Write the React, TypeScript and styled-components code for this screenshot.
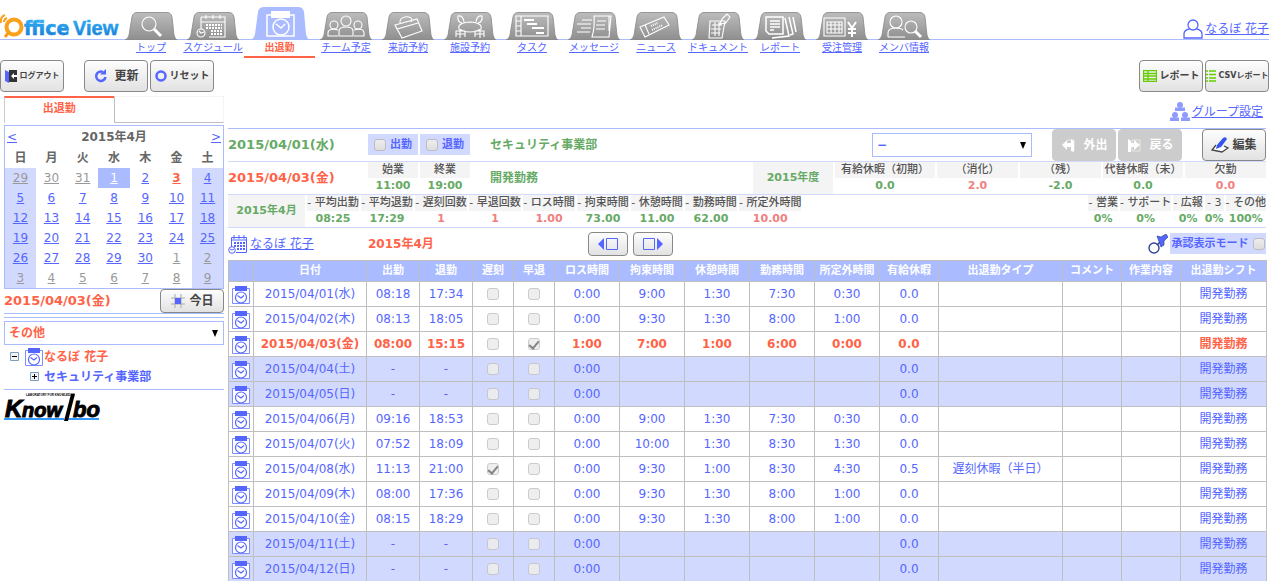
import React from "react";
import styled, { createGlobalStyle } from "styled-components";

const c = {
  blue: "#5566ff",
  line: "#aabbff",
  pale: "#d2d9ff",
  red: "#ff6347",
  green: "#66aa66",
  pink: "#f08080",
  gray: "#666666",
  mute: "#999999",
  cell: "#f4f4f4",
  grid: "#bfbfbf",
};

const Global = createGlobalStyle`
  * { box-sizing: border-box; }
  html { overflow: hidden; }
  body {
    margin: 0;
    background: #ffffff;
    color: ${c.gray};
    font: 12px/16px "DejaVu Sans", "Noto Sans CJK JP", sans-serif;
    white-space: nowrap;
  }
  button, select, input { font: inherit; }
  svg { display: block; flex: none; }
`;

/* ---------- header ---------- */

const Header = styled.header`
  display: flex;
  height: 60px;
  overflow: hidden;
  background: linear-gradient(${c.line}, ${c.line}) 0 39px / 100% 1px no-repeat;
`;
const Brand = styled.h1`
  margin: 0;
  width: 120px;
  flex: none;
  padding-top: 12px;
`;
const Tabs = styled.nav`
  display: flex;
  flex: 1;
`;
const TabLink = styled.a<{ $active?: boolean }>`
  display: flex;
  flex-direction: column;
  align-items: center;
  justify-content: flex-end;
  width: ${(p) => (p.$active ? 71 : 62)}px;
  height: 58px;
  flex: none;
  font-size: 10px;
  line-height: 16px;
  color: ${(p) => (p.$active ? c.red : c.blue)};
  font-weight: ${(p) => (p.$active ? "bold" : "normal")};
  text-decoration: ${(p) => (p.$active ? "none" : "underline")};
  border-bottom: 2px solid ${(p) => (p.$active ? c.red : "transparent")};
`;
const UserLink = styled.a`
  display: flex;
  align-items: center;
  gap: 2px;
  height: 20px;
  margin-top: 19px;
  color: ${c.blue};
`;

/* ---------- buttons ---------- */

const Push = styled.button<{ $w?: number; $h?: number; $size?: number; $off?: boolean }>`
  display: flex;
  align-items: center;
  justify-content: center;
  gap: 3px;
  flex: none;
  width: ${(p) => p.$w ?? 64}px;
  height: ${(p) => p.$h ?? 32}px;
  padding: 0;
  border: 1px solid ${(p) => (p.$off ? "#cccccc" : "#888888")};
  border-radius: 4px;
  background: ${(p) => (p.$off ? "#cccccc" : "linear-gradient(#fdfdfd, #e2e2e2)")};
  color: ${(p) => (p.$off ? "#ffffff" : "#444444")};
  font-size: ${(p) => p.$size ?? 12}px;
  font-weight: bold;
`;
const Toolbar = styled.div`
  display: flex;
  gap: 2px;
  height: 36px;
`;
const Gap = styled.span<{ $w?: number }>`
  flex: ${(p) => (p.$w ? `0 0 ${p.$w}px` : "1")};
`;

/* ---------- sidebar ---------- */

const Body = styled.div`
  display: flex;
  gap: 4px;
  padding: 0 3px 0 4px;
`;
const Side = styled.aside`
  width: 220px;
  flex: none;
`;
const SideTabs = styled.div`
  display: flex;
  height: 27px;
  margin-bottom: 2px;
`;
const SideTab = styled.div<{ $active?: boolean }>`
  flex: 1;
  text-align: center;
  line-height: 22px;
  color: ${c.red};
  font-size: 11px;
  font-weight: bold;
  border-top: ${(p) => (p.$active ? `2px solid ${c.red}` : `1px solid ${c.cell}`)};
  border-left: 1px solid ${(p) => (p.$active ? "#cccccc" : c.grid)};
  border-right: ${(p) => (p.$active ? "none" : `1px solid ${c.cell}`)};
  border-bottom: ${(p) => (p.$active ? "none" : `1px solid ${c.grid}`)};
`;
const Calendar = styled.table`
  width: 100%;
  border-collapse: collapse;
  table-layout: fixed;
  text-align: center;
  border: 1px solid ${c.line};
  th, td { padding: 0; height: 20px; }
`;
const CalHead = styled.div`
  display: flex;
  justify-content: space-between;
  align-items: center;
  height: 23px;
  padding: 0 2px;
  font-weight: bold;
  border: solid ${c.line};
  border-width: 1px 1px 0;
  a { color: ${c.blue}; font-weight: normal; }
  + table { border-top: none; }
`;
const Day = styled.td<{ $edge?: boolean; $pick?: boolean }>`
  background: ${(p) => (p.$pick ? c.line : p.$edge ? c.pale : "transparent")};
`;
const DayLink = styled.a<{ $kind: string }>`
  color: ${(p) => ({ out: c.mute, today: c.red, pick: "#ffffff" } as Record<string, string>)[p.$kind] ?? c.blue};
  font-weight: ${(p) => (p.$kind === "today" ? "bold" : "normal")};
`;
const Today = styled.div`
  display: flex;
  justify-content: space-between;
  align-items: center;
  height: 25px;
  border-bottom: 1px solid ${c.line};
`;
const BigDate = styled.strong<{ $red?: boolean; $w?: number }>`
  width: ${(p) => (p.$w ? `${p.$w}px` : "auto")};
  flex: none;
  align-self: center;
  font-size: 13px;
  color: ${(p) => (p.$red ? c.red : c.green)};
`;
const Picker = styled.div<{ $w?: number }>`
  position: relative;
  flex: none;
  align-self: center;
  width: ${(p) => (p.$w ? `${p.$w}px` : "100%")};
  svg { position: absolute; right: 6px; top: 9px; pointer-events: none; }
`;
const Select = styled.select<{ $red?: boolean }>`
  display: block;
  width: 100%;
  height: 24px;
  padding: 0 4px;
  appearance: none;
  background: #ffffff;
  border: 1px solid ${c.line};
  border-radius: 0;
  color: ${(p) => (p.$red ? c.red : c.blue)};
  font-weight: bold;
`;
const SideRule = styled.div`
  height: 4px;
  margin-bottom: 3px;
  border-bottom: 1px solid ${c.line};
`;
const Tree = styled.ul`
  margin: 0;
  padding: 2px 0 2px;
  list-style: none;
  border-bottom: 1px solid ${c.line};
`;
const Leaf = styled.li<{ $depth: number }>`
  display: flex;
  align-items: center;
  height: 20px;
  padding-left: ${(p) => (p.$depth ? 25 : 5)}px;
  color: ${(p) => (p.$depth ? c.blue : c.red)};
  font-weight: bold;
`;
const Toggle = styled.button`
  width: 11px;
  height: 11px;
  margin: 0 4px 0 0;
  padding: 0;
  border: none;
  background: none;
`;

/* ---------- main ---------- */

const Main = styled.main`
  flex: 1;
  min-width: 0;
  padding-top: 6px;
`;
const GroupBar = styled.div`
  display: flex;
  justify-content: flex-end;
  height: 26px;
  padding-right: 3px;
  a { display: flex; gap: 2px; height: 20px; align-items: center; color: ${c.blue}; }
`;
const Row = styled.div<{ $first?: boolean }>`
  display: flex;
  gap: 2px;
  height: 33px;
  border-top: 1px solid ${(p) => (p.$first ? c.line : c.pale)};
`;
const Chip = styled.label<{ $w?: number }>`
  display: flex;
  align-items: center;
  justify-content: center;
  gap: 4px;
  width: ${(p) => (p.$w ? `${p.$w}px` : "auto")};
  height: 21px;
  margin-top: 5px;
  background: ${c.pale};
  color: ${c.blue};
  font-size: 11px;
  font-weight: bold;
`;
const Check = styled.input.attrs({ type: "checkbox" })`
  appearance: none;
  display: grid;
  place-items: center;
  width: 12px;
  height: 12px;
  margin: 0;
  border: 1px solid #bcbcc4;
  border-radius: 3px;
  background: linear-gradient(#ededed, #dedede);
  &:disabled { border-color: #c6c6c6; background: #ededed; opacity: 0.9; }
  &:checked::after {
    content: "";
    width: 4px;
    height: 8px;
    border: solid #777777;
    border-width: 0 2px 2px 0;
    transform: rotate(40deg);
  }
`;
const Dept = styled.strong`
  align-self: center;
  color: ${c.green};
  padding-left: 18px;
`;
const Period = styled.strong<{ $w: number }>`
  width: ${(p) => p.$w}px;
  background: ${c.cell};
  color: ${c.green};
  font-size: 11px;
  line-height: 31px;
  text-align: center;
`;
const Stat = styled.dl<{ $w?: number; $tone?: string }>`
  margin: 0;
  min-width: ${(p) => p.$w ?? 0}px;
  text-align: center;
  font-size: 11px;
  line-height: 16px;
  dt { background: ${c.cell}; color: #555555; font-weight: 500; }
  dd { margin: 0; font-weight: bold; color: ${(p) => p.$tone ?? c.green}; }
`;
const OwnerLink = styled.a`
  display: flex;
  align-items: center;
  gap: 2px;
  width: 138px;
  color: ${c.blue};
`;
const Month = styled.strong`
  width: 218px;
  color: ${c.red};
  line-height: 32px;
`;
const Steps = styled.div`
  display: flex;
  align-items: center;
  gap: 5px;
`;
const ModeIcon = styled.svg`
  align-self: center;
`;

/* ---------- attendance table ---------- */

const Sheet = styled.table`
  width: 100%;
  table-layout: fixed;
  border-collapse: collapse;
  text-align: center;
  th, td { padding: 0; border: 1px solid ${c.grid}; }
  th { height: 21px; background: ${c.line}; color: #ffffff; font-size: 11px; line-height: 16px; }
  td > svg { margin: 2px auto 0; }
  td > input { margin: 0 auto; }
`;
const Col = styled.col<{ $w: number }>`
  width: ${(p) => p.$w}px;
`;
const Line = styled.tr<{ $kind?: string }>`
  height: 25px;
  color: ${(p) => (p.$kind === "today" ? c.red : c.blue)};
  font-weight: ${(p) => (p.$kind === "today" ? "bold" : "normal")};
  background: ${(p) => (p.$kind === "off" ? c.pale : "#ffffff")};
`;

/* ---------- drawings ---------- */

const art: Record<string, React.ReactNode> = {
  top: (<><circle cx="24" cy="12" r="7" /><path d="M29 17l7 7" strokeWidth="3" /></>),
  schedule: (<><path d="M14 5h24v20H22M14 5v12M14 10h24M19 3v4M26 3v4M33 3v4" /><path d="M19 13h16M19 16h16M24 19h11M24 22h11" strokeDasharray="2 1" strokeWidth="2" /><circle cx="14" cy="21" r="4" /><path d="M12 19l2 2 3-1" /></>),
  team: (<><circle cx="26" cy="9" r="5" /><path d="M19 24v-5q0-4 7-4t7 4v5z" /><circle cx="14" cy="13" r="4" /><circle cx="38" cy="13" r="4" /><path d="M18 24H8v-3q0-4 6-4l4 1M34 24h10v-3q0-4-6-4l-4 1" /></>),
  visit: (<><path d="M13 13l22-6 5 12-20 7zM13 13l2 4 21-6M18 12q-1-6 5-7t7 3l-1 2M15 17l5 9" /></>),
  facility: (<><path d="M15 17q-2-6 11-7 13 1 11 7-5 3-11 3t-11-3zM18 11q-5-1-4-7 5-1 6 6M34 11q5-1 4-7-5-1-6 6M16 18v8M21 20v5M36 18v8M31 20v5M12 19h9v3h-9zM40 19h-9v3h9zM12 22v3M40 22v3" /></>),
  task: (<><path d="M10 4h32v20H10zM15 4v20M10 9h5M10 14h5M10 19h5" /><path d="M18 8h10M21 12h10M26 16h12M30 21h8" strokeWidth="2" /></>),
  message: (<><path d="M26 4h17l-2 21H24q3-10 2-21zM41 4v15" /><path d="M29 9h9M28 13h9M28 17h9M14 8h10M9 12h14M13 16h10M9 20h13" /></>),
  news: (<><path d="M10 15L34 5l5 8-24 12zM15 13l4 9M10 15l5 10" /><path d="M21 14l7-3M22 18l11-5" strokeDasharray="1 1" strokeWidth="2" /></>),
  document: (<><path d="M18 9h15l-3 17H17zM20 13l10 0M19 17h10M19 21h9M23 10v14M27 10v14M30 7l5-5 3 3-5 7M30 7l-2 5 5-1" /></>),
  report: (<><path d="M12 5h17v17H15l-3-3zM16 9h10M16 12h10M16 15h10M16 18h4M31 6l4 18-17 2M35 5l4 17-3 1M39 5l3 15" strokeWidth="1.5" /></>),
  order: (<><path d="M8 6h21v18H8z" /><path d="M11 10h15v11H11zM11 13h15M11 17h15M15 10v11M19 10v11M23 10v11" /><path d="M32 10l4 6 4-6M36 16v9M32 17h8M32 21h8" strokeWidth="2" /></>),
  member: (<><circle cx="18" cy="10" r="6" /><path d="M10 25v-4q0-5 8-5 5 0 7 2M10 25h17" /><circle cx="33" cy="15" r="6" /><path d="M37 19l6 6" strokeWidth="3" /></>),
};

const TabShape = ({ id }: { id: string }) => (
  <svg width="52" height="28" viewBox="0 0 52 28" aria-hidden="true">
    <defs>
      <linearGradient id={"g" + id} x1="0" y1="0" x2="0" y2="1">
        <stop offset="0" stopColor="#bcbcbc" /><stop offset="1" stopColor="#8e8e8e" />
      </linearGradient>
    </defs>
    <path d="M0 28q3-1 4-5L7 5q1-4.500 5-4.500h30q4 0 5 4.500l2 18q1 4 3 5z" fill={`url(#g${id})`} stroke="#868686" strokeWidth=".8" />
    <g fill="none" stroke="#ffffff" strokeWidth="1.100">{art[id]}</g>
  </svg>
);

const ActiveShape = () => (
  <svg width="60" height="33" viewBox="0 0 60 33" aria-hidden="true">
    <path d="M0 33q4-1 5-6L8 5q1-5 6-5h34q5 0 6 5l2 22q1 5 4 6z" fill={c.line} />
    <g fill="none" stroke="#ffffff" strokeWidth="1.500">
      <path d="M21 8h-4v21h27V8h-4" /><circle cx="31" cy="20" r="8" /><path d="M26 17l5 4 4-4" />
    </g>
    <path d="M21 4h19v7H21z" fill="#ffffff" />
  </svg>
);

const ClockIcon = () => (
  <svg width="20" height="20" viewBox="0 0 20 20" aria-hidden="true">
    <path d="M1.500 3.500h17v15h-17z" fill="#ffffff" stroke="#7f8cff" />
    <path d="M4 1h12v5H4z" fill={c.blue} />
    <g fill="none" stroke={c.blue} strokeWidth="1.200">
      <circle cx="10" cy="12.500" r="5.500" />
      <path d="M6.500 10.500l3.500 2.500 3-2.500" />
    </g>
  </svg>
);

const Arrow = () => (
  <svg width="6" height="7" viewBox="0 0 6 7" aria-hidden="true"><path d="M0 0h6L3 7z" fill="#000000" /></svg>
);

const OfficeLogo = () => (
  <svg width="120" height="28" viewBox="0 0 120 28" role="img" aria-label="OfficeView">
    <defs>
      <linearGradient id="sky" x1="0" y1="0" x2="0" y2="1">
        <stop offset="0" stopColor="#35b4f5" /><stop offset="1" stopColor="#1478d8" />
      </linearGradient>
    </defs>
    <circle cx="14" cy="15" r="7.500" fill="none" stroke="#f9a11b" strokeWidth="4" />
    <path d="M9 20l-4 5" stroke="#f9a11b" strokeWidth="3" />
    <path d="M1 11q-1-6 4-8M4 10q0-3 3-4" fill="none" stroke="#f9a11b" strokeWidth="2" />
    <g fontWeight="bold" fill="url(#sky)" stroke="url(#sky)" strokeWidth=".5">
      <text x="24" y="23" fontSize="19" fontFamily="DejaVu Sans">ffice</text>
      <text x="73" y="23" fontSize="20" fontFamily="Liberation Sans">View</text>
    </g>
  </svg>
);

const KnowlboLogo = () => (
  <svg width="100" height="32" viewBox="0 0 100 32" role="img" aria-label="Knowlbo">
    <path d="M0 29h60M64 29h31" stroke="#3399ff" strokeWidth="2" />
    <g fontFamily="Liberation Sans" fontWeight="bold" fontStyle="italic" fill="#000000" stroke="#000000" strokeWidth="1">
      <text x="1" y="27" fontSize="24">K</text>
      <text x="18" y="27" fontSize="20">now</text>
      <text x="69" y="27" fontSize="22">bo</text>
    </g>
    <path d="M60 31L67 4h4l-7 27z" fill="#000000" />
    <text x="22" y="6" fontSize="3" fontWeight="bold" fontFamily="Liberation Sans" fill="#000000">LABORATORY FOR KNOWLEDGE</text>
  </svg>
);

/* ---------- data ---------- */

const tabs = [
  ["top", "トップ"], ["schedule", "スケジュール"], ["attendance", "出退勤"], ["team", "チーム予定"],
  ["visit", "来訪予約"], ["facility", "施設予約"], ["task", "タスク"], ["message", "メッセージ"],
  ["news", "ニュース"], ["document", "ドキュメント"], ["report", "レポート"], ["order", "受注管理"], ["member", "メンバ情報"],
];

const weeks = [
  [29, 30, 31, 1, 2, 3, 4], [5, 6, 7, 8, 9, 10, 11], [12, 13, 14, 15, 16, 17, 18],
  [19, 20, 21, 22, 23, 24, 25], [26, 27, 28, 29, 30, 1, 2], [3, 4, 5, 6, 7, 8, 9],
];
const dayKind = (w: number, d: number) => {
  if ((w === 0 && d > 20) || (w >= 4 && d < 20)) return "out";
  if (w === 0 && d === 1) return "pick";
  if (w === 0 && d === 3) return "today";
  return "in";
};

const monthly: [string, string, string?][] = [
  ["平均出勤", "08:25"], ["平均退勤", "17:29"], ["遅刻回数", "1", c.pink], ["早退回数", "1", c.pink],
  ["ロス時間", "1.00", c.pink], ["拘束時間", "73.00"], ["休憩時間", "11.00"], ["勤務時間", "62.00"], ["所定外時間", "10.00", c.pink],
];
const shares = [["営業", "0%"], ["サポート", "0%"], ["広報", "0%"], ["3", "0%"], ["その他", "100%"]];
const yearly: [string, string, number, string?][] = [
  ["有給休暇（初期）", "0.0", 100], ["（消化）", "2.0", 81, c.pink], ["（残）", "-2.0", 81],
  ["代替休暇（未）", "0.0", 80], ["欠勤", "0.0", 81, c.pink],
];

const widths = [25, 113, 53, 53, 41, 41, 65, 65, 65, 65, 65, 59, 124, 59, 59, 86];
const heads = ["", "日付", "出勤", "退勤", "遅刻", "早退", "ロス時間", "拘束時間", "休憩時間", "勤務時間", "所定外時間", "有給休暇", "出退勤タイプ", "コメント", "作業内容", "出退勤シフト"];

type Rec = { d: string; t: string[]; paid?: string; type?: string; late?: boolean; early?: boolean; kind?: string };
const off = ["-", "-", "0:00", "", "", "", ""];
const records: Rec[] = [
  { d: "2015/04/01(水)", t: ["08:18", "17:34", "0:00", "9:00", "1:30", "7:30", "0:30"] },
  { d: "2015/04/02(木)", t: ["08:13", "18:05", "0:00", "9:30", "1:30", "8:00", "1:00"] },
  { d: "2015/04/03(金)", t: ["08:00", "15:15", "1:00", "7:00", "1:00", "6:00", "0:00"], early: true, kind: "today" },
  { d: "2015/04/04(土)", t: off, kind: "off" },
  { d: "2015/04/05(日)", t: off, kind: "off" },
  { d: "2015/04/06(月)", t: ["09:16", "18:53", "0:00", "9:00", "1:30", "7:30", "0:30"] },
  { d: "2015/04/07(火)", t: ["07:52", "18:09", "0:00", "10:00", "1:30", "8:30", "1:30"] },
  { d: "2015/04/08(水)", t: ["11:13", "21:00", "0:00", "9:30", "1:00", "8:30", "4:30"], paid: "0.5", type: "遅刻休暇（半日）", late: true },
  { d: "2015/04/09(木)", t: ["08:00", "17:36", "0:00", "9:30", "1:30", "8:00", "1:00"] },
  { d: "2015/04/10(金)", t: ["08:15", "18:29", "0:00", "9:30", "1:30", "8:00", "1:00"] },
  { d: "2015/04/11(土)", t: off, kind: "off" },
  { d: "2015/04/12(日)", t: off, kind: "off" },
];

/* ---------- page ---------- */

function Sidebar() {
  return (
    <Side>
      <SideTabs><SideTab $active>出退勤</SideTab><SideTab /></SideTabs>
      <CalHead><a href="#prev">&lt;</a><span>2015年4月</span><a href="#next">&gt;</a></CalHead>
      <Calendar>
        <thead><tr>{[..."日月火水木金土"].map((d) => <th key={d} scope="col">{d}</th>)}</tr></thead>
        <tbody>
          {weeks.map((week, w) => (
            <tr key={w}>
              {week.map((d, i) => {
                const kind = dayKind(w, d);
                return (
                  <Day key={i} $edge={i === 0 || i === 6} $pick={kind === "pick"}>
                    <DayLink href="#day" $kind={kind}>{d}</DayLink>
                  </Day>
                );
              })}
            </tr>
          ))}
        </tbody>
      </Calendar>
      <Today>
        <BigDate $red>2015/04/03(金)</BigDate>
        <Push $h={24}>
          <svg width="16" height="14" viewBox="0 0 16 14"><path d="M5 0v14M11 0v14M1 4h14M1 10h14" stroke="#aaaaaa" /><path d="M5 4h6v6H5z" fill={c.blue} /></svg>
          今日
        </Push>
      </Today>
      <SideRule />
      <Picker>
        <Select $red aria-label="グループ"><option>その他</option></Select>
        <Arrow />
      </Picker>
      <Tree>
        <Leaf $depth={0}>
          <Toggle aria-label="閉じる"><svg width="11" height="11" viewBox="0 0 11 11"><path d="M1.500 1.500h8v8h-8z" fill="#f4f4f4" stroke="#7b9ebd" /><path d="M3 5.500h5" stroke="#000000" /></svg></Toggle>
          <ClockIcon />なるぼ 花子
        </Leaf>
        <Leaf $depth={1}>
          <Toggle aria-label="開く"><svg width="11" height="11" viewBox="0 0 11 11"><path d="M1.500 1.500h8v8h-8z" fill="#f4f4f4" stroke="#7b9ebd" /><path d="M3 5.500h5M5.500 3v5" stroke="#000000" /></svg></Toggle>
          セキュリティ事業部
        </Leaf>
      </Tree>
      <KnowlboLogo />
    </Side>
  );
}

export default function App() {
  return (
    <>
      <Global />
      <Header>
        <Brand><OfficeLogo /></Brand>
        <Tabs>
          {tabs.map(([id, label]) => (
            <TabLink key={id} href={"#" + id} $active={id === "attendance"}>
              {id === "attendance" ? <ActiveShape /> : <TabShape id={id} />}
              {label}
            </TabLink>
          ))}
        </Tabs>
        <UserLink href="#user">
          <svg width="20" height="20" viewBox="0 0 20 20" fill="none" stroke={c.blue} strokeWidth="1.300"><circle cx="10" cy="6" r="5" /><path d="M6.500 10Q1 11 1 15v4h18v-4q0-4-5.500-5" /></svg>
          なるぼ 花子
        </UserLink>
      </Header>
      <Toolbar>
        <Push $size={8}>
          <svg width="12" height="14" viewBox="0 0 12 14"><path d="M4 1h8v12H4z" fill="#333333" /><path d="M0 1l4 2v11l-4-2z" fill={c.blue} /><path d="M6 7l3-3v2h3v2H9v2z" fill="#ffffff" /></svg>
          ログアウト
        </Push>
        <Gap $w={16} />
        <Push>
          <svg width="18" height="14" viewBox="0 0 18 14"><path d="M10 3A4.700 4.700 0 1 0 12.500 8" fill="none" stroke={c.blue} strokeWidth="2.500" /><path d="M7 5.500h6V0z" fill={c.blue} /></svg>
          更新
        </Push>
        <Push $size={10}>
          <svg width="12" height="12" viewBox="0 0 12 12"><circle cx="6" cy="6" r="4.500" fill="none" stroke={c.blue} strokeWidth="2.500" /></svg>
          リセット
        </Push>
        <Gap />
        <Push $size={10}>
          <svg width="14" height="12" viewBox="0 0 14 12"><path d="M.5.500h13v11H.5zM5 0v12M0 3.500h14M0 6h14M0 9h14" fill="none" stroke="#66cc00" strokeWidth="1.300" /></svg>
          レポート
        </Push>
        <Push $size={8}>
          <svg width="10" height="12" viewBox="0 0 10 12"><path d="M0 1h2M0 4.500h2M0 8h2M0 11h2M3 1h7M3 4.500h7M3 8h7M3 11h7" stroke="#66cc00" strokeWidth="1.400" /></svg>
          CSVレポート
        </Push>
      </Toolbar>
      <Body>
        <Sidebar />
        <Main>
          <GroupBar>
            <a href="#group">
              <svg width="20" height="20" viewBox="0 0 20 20" fill="#8f9bff"><circle cx="10" cy="3" r="3" /><path d="M5 5.500h10V9H5z" /><circle cx="5" cy="13" r="3" /><path d="M0 15.500h9V19H0z" /><circle cx="15" cy="13" r="3" /><path d="M11 15.500h9V19h-9z" /></svg>
              グループ設定
            </a>
          </GroupBar>
          <Row $first>
            <BigDate $w={138}>2015/04/01(水)</BigDate>
            <Chip $w={50}><Check />出勤</Chip>
            <Chip $w={50}><Check />退勤</Chip>
            <Dept>セキュリティ事業部</Dept>
            <Gap />
            <Picker $w={160}>
              <Select aria-label="外出先"><option>−</option></Select>
              <Arrow />
            </Picker>
            <Gap $w={16} />
            <Push $off disabled>
              <svg width="20" height="14" viewBox="0 0 20 14"><path d="M7 2h7v10" fill="none" stroke="#e8e8e8" /><path d="M2 7l5-5v3h4V1l3 2v11l-3-1V9H7v3z" fill="#ffffff" /></svg>
              外出
            </Push>
            <Push $off disabled>
              <svg width="20" height="14" viewBox="0 0 20 14"><path d="M6 2h8v11H6z" fill="none" stroke="#e8e8e8" /><path d="M2 1l3 2v2h3V2l6 5-6 5V9H5v5H2z" fill="#ffffff" /></svg>
              戻る
            </Push>
            <Gap $w={16} />
            <Push>
              <svg width="18" height="18" viewBox="0 0 18 18"><path d="M5 9L1 14l10 2 6-4-4-2" fill="#ffffff" stroke="#444444" strokeWidth="1.300" /><path d="M6 9l6-7q3-2 4 1l-6 8-5 2z" fill="#3355ee" /></svg>
              編集
            </Push>
          </Row>
          <Row>
            <BigDate $red $w={138}>2015/04/03(金)</BigDate>
            <Stat $w={50}><dt>始業</dt><dd>11:00</dd></Stat>
            <Stat $w={50}><dt>終業</dt><dd>19:00</dd></Stat>
            <Dept>開発勤務</Dept>
            <Gap />
            <Period $w={80}>2015年度</Period>
            {yearly.map(([k, v, w, tone]) => <Stat key={k} $w={w} $tone={tone}><dt>{k}</dt><dd>{v}</dd></Stat>)}
          </Row>
          <Row>
            <Period $w={77}>2015年4月</Period>
            {monthly.map(([k, v, tone]) => <Stat key={k} $w={52} $tone={tone}><dt>- {k}</dt><dd>{v}</dd></Stat>)}
            <Gap />
            {shares.map(([k, v]) => <Stat key={k}><dt>- {k}</dt><dd>{v}</dd></Stat>)}
          </Row>
          <Row>
            <OwnerLink href="#owner">
              <svg width="20" height="20" viewBox="0 0 20 20" fill="none" stroke={c.blue}><path d="M3.500 13V3.500h15v15H8M3.500 6h15M6 1v4M11 1v4M16 1v4" /><path d="M6 9h11M6 12h11M9 15h8" strokeWidth="2" strokeDasharray="2 1" /><circle cx="4" cy="16" r="3.300" /><path d="M2 15l2 1 2-1" /></svg>
              なるぼ 花子
            </OwnerLink>
            <Month>2015年4月</Month>
            <Steps>
              <Push $w={40} $h={24} aria-label="前月"><svg width="20" height="14" viewBox="0 0 20 14"><path d="M0 7l6-6v12z" fill={c.blue} /><path d="M8.500 1.500h11v11h-11z" fill="none" stroke={c.blue} /></svg></Push>
              <Push $w={40} $h={24} aria-label="翌月"><svg width="20" height="14" viewBox="0 0 20 14"><path d="M20 7l-6-6v12z" fill={c.blue} /><path d="M.5 1.500h11v11H.5z" fill="none" stroke={c.blue} /></svg></Push>
            </Steps>
            <Gap />
            <ModeIcon width="20" height="20" viewBox="0 0 20 20"><circle cx="6" cy="14" r="5" fill="#ffffff" stroke="#334499" strokeWidth="1.400" /><path d="M9 2l4 1 5-3 2 3-4 4v4l-3 2z" fill={c.blue} stroke="#334499" strokeWidth=".7" /><path d="M9 11l3-3" stroke="#334499" strokeWidth="1.500" /></ModeIcon>
            <Chip $w={96}>承認表示モード<Check /></Chip>
          </Row>
          <Sheet>
            <colgroup>{widths.map((w, i) => <Col key={i} $w={w} />)}</colgroup>
            <thead><tr>{heads.map((h, i) => <th key={i} scope="col">{h}</th>)}</tr></thead>
            <tbody>
              {records.map((r) => (
                <Line key={r.d} $kind={r.kind}>
                  <td><ClockIcon /></td>
                  <td>{r.d}</td>
                  <td>{r.t[0]}</td>
                  <td>{r.t[1]}</td>
                  <td><Check disabled defaultChecked={r.late} aria-label="遅刻" /></td>
                  <td><Check disabled defaultChecked={r.early} aria-label="早退" /></td>
                  {r.t.slice(2).map((t, i) => <td key={i}>{t}</td>)}
                  <td>{r.paid ?? "0.0"}</td>
                  <td>{r.type}</td>
                  <td />
                  <td />
                  <td>開発勤務</td>
                </Line>
              ))}
            </tbody>
          </Sheet>
        </Main>
      </Body>
    </>
  );
}
